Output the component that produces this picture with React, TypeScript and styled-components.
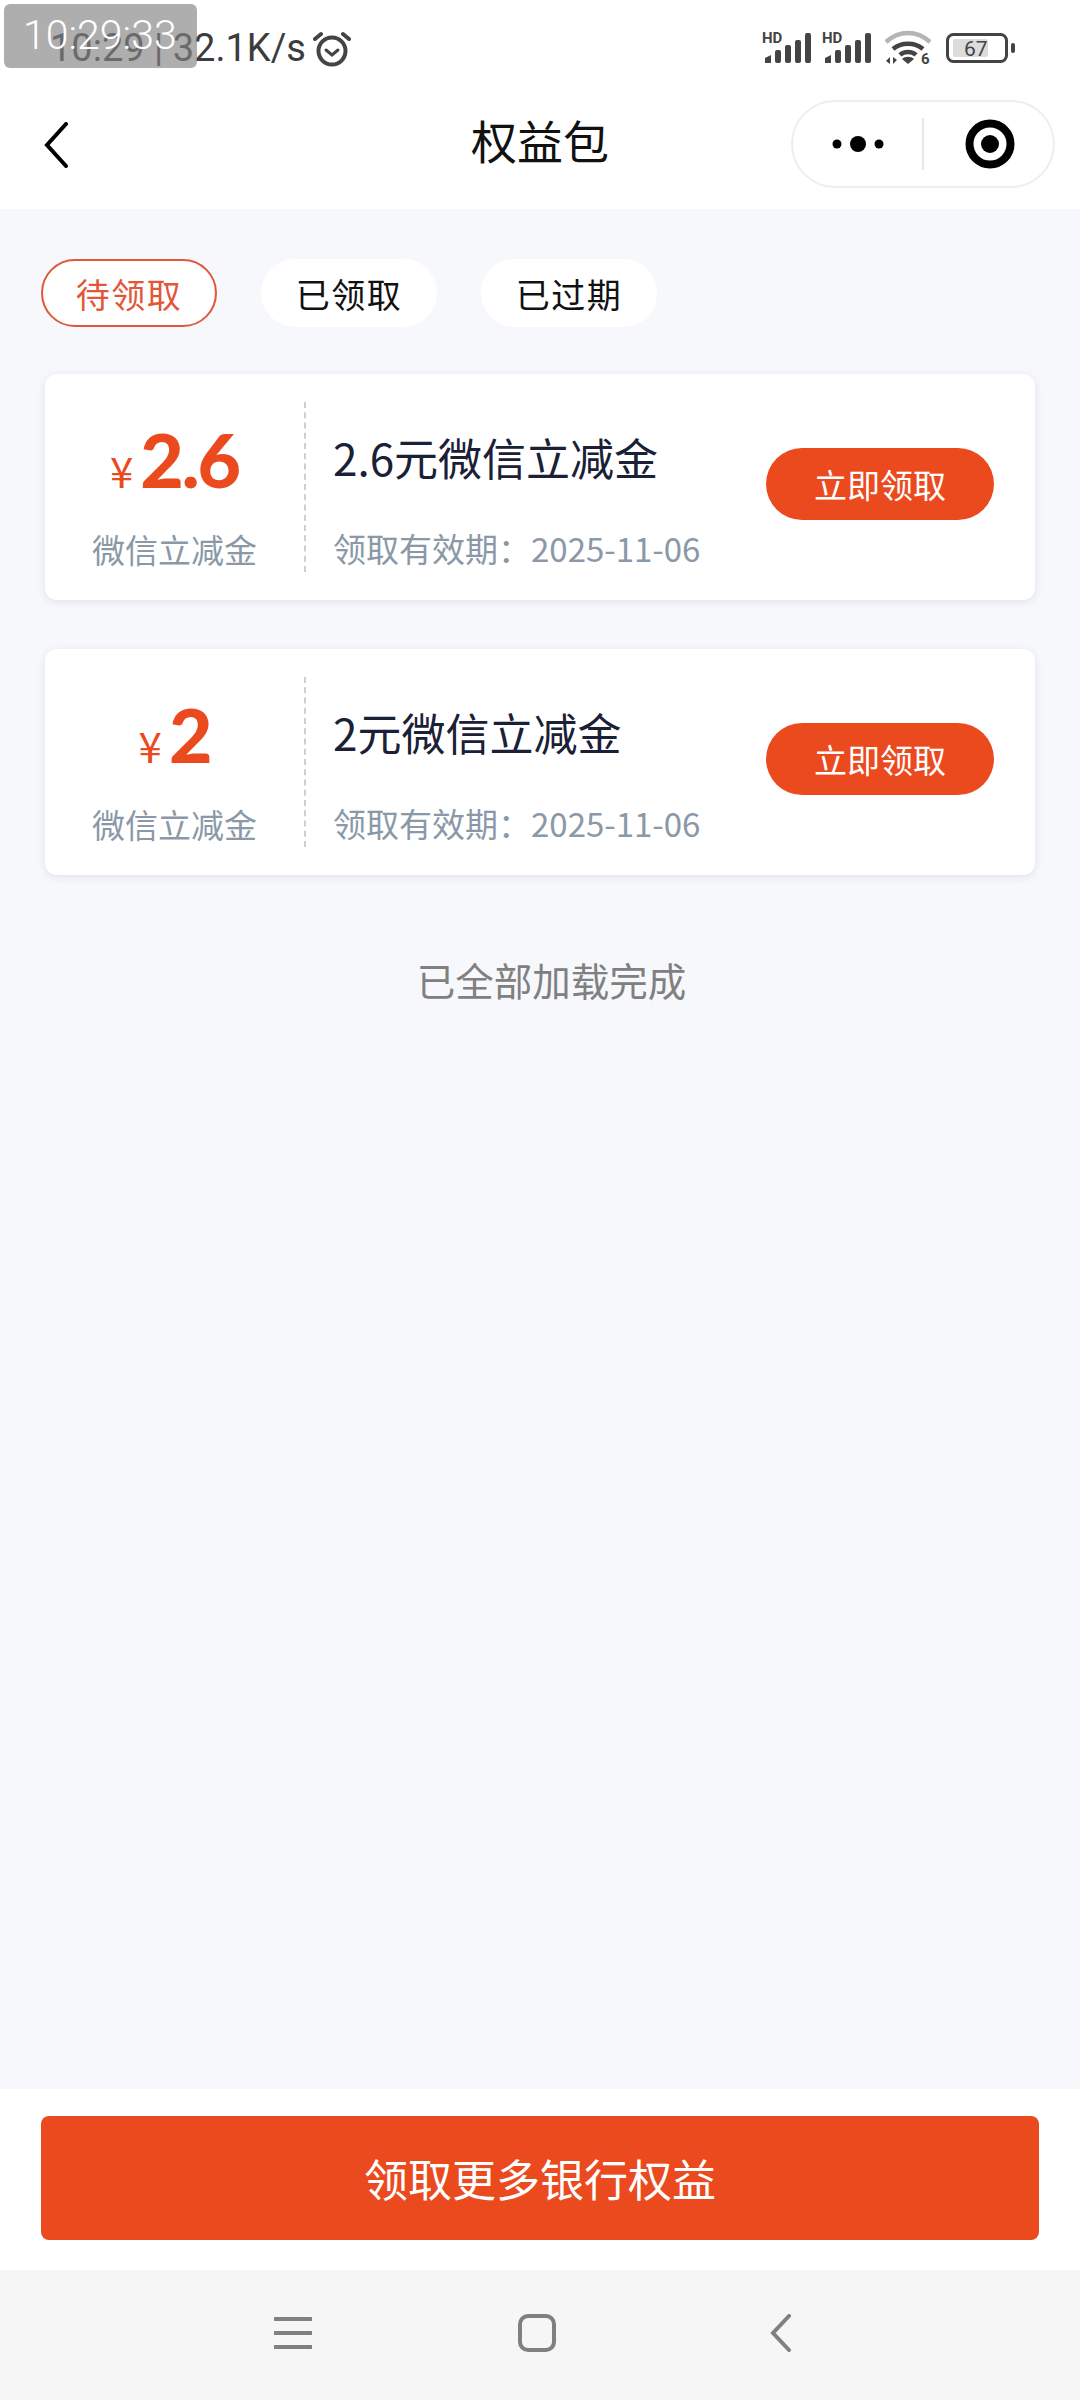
import React from "react";
import styled, { createGlobalStyle } from "styled-components";

const ORANGE = "#eb4a1f";
const CJK = `"Noto Sans CJK SC", "Noto Sans", sans-serif`;

const GlobalStyle = createGlobalStyle`
  html, body {
    margin: 0;
    padding: 0;
    background: #f6f8fc;
  }
  * {
    box-sizing: border-box;
  }
`;

const coupons = [
  { amount: "2.6", title: "2.6元微信立减金" },
  { amount: "2", title: "2元微信立减金" },
];

const tabs = ["待领取", "已领取", "已过期"];

const SignalIcon = () => (
  <svg width="50" height="38" viewBox="0 -3 50 38">
    <text x="0" y="11" fontFamily="Roboto, sans-serif" fontWeight="700" fontSize="15" fill="#444">
      HD
    </text>
    <path d="M3 31v-5l6-3v8z" fill="#444" />
    <rect x="13" y="18" width="6" height="13" rx="2" fill="#444" />
    <rect x="23" y="13" width="6" height="18" rx="2" fill="#444" />
    <rect x="33" y="8" width="6" height="23" rx="2" fill="#444" />
    <rect x="43" y="1" width="6" height="30" rx="2" fill="#444" />
  </svg>
);

const WifiIcon = () => (
  <svg width="46" height="42" viewBox="0 -4 46 42">
    <path d="M1 11C14 -1 32 -1 45 11" fill="none" stroke="#b5b5b5" strokeWidth="4.5" />
    <path d="M8 18c8-7 22-7 30 0" fill="none" stroke="#444" strokeWidth="4.5" />
    <path d="M15 24c4-4 12-4 16 0" fill="none" stroke="#444" strokeWidth="4.5" />
    <path d="M23 33l-6-5c3-3 9-3 12 0z" fill="#444" />
    <path d="M5 33v-7l-4 4zM8 26v7l4-4z" fill="#444" />
    <text x="36" y="33" fontFamily="Roboto, sans-serif" fontWeight="700" fontSize="15" fill="#444">
      6
    </text>
  </svg>
);

const BatteryIcon = () => (
  <svg width="70" height="30" viewBox="0 0 70 30">
    <rect x="1.5" y="1.5" width="59" height="27" rx="6" fill="none" stroke="#444" strokeWidth="3" />
    <rect x="7" y="6" width="35" height="18" rx="2" fill="#dcdcdc" />
    <rect x="65" y="10" width="4" height="10" rx="2" fill="#444" />
    <text x="18" y="23" fontFamily="Roboto, sans-serif" fontSize="21" fill="#444">
      67
    </text>
  </svg>
);

const AlarmIcon = () => (
  <svg width="38" height="37" viewBox="0 0 38 37">
    <circle cx="19" cy="21" r="13.5" fill="none" stroke="#444" strokeWidth="4" />
    <path d="M13 20l6 5 6-5" fill="none" stroke="#444" strokeWidth="3" strokeLinecap="round" />
    <path d="M2 9l6-5M36 9l-6-5" fill="none" stroke="#444" strokeWidth="4" strokeLinecap="round" />
  </svg>
);

const App = () => {
  return (
    <Page>
      <GlobalStyle />
      <Watermark>10:29:33</Watermark>
      <StatusBar>
        <StatusLeft>
          <StatusText>10:29 | 32.1K/s</StatusText>
          <AlarmIcon />
        </StatusLeft>
        <StatusRight>
          <SignalIcon />
          <SignalIcon />
          <WifiSlot>
            <WifiIcon />
          </WifiSlot>
          <BatteryIcon />
        </StatusRight>
      </StatusBar>

      <NavBar>
        <svg width="24" height="46" viewBox="0 0 24 46">
          <path d="M22 2L3 23l19 21" fill="none" stroke="#000" strokeWidth="4" strokeLinecap="round" strokeLinejoin="miter" />
        </svg>
        <NavTitle>权益包</NavTitle>
        <Capsule>
          <CapsuleSide $width={130}>
            <svg width="52" height="18" viewBox="0 0 52 18">
              <circle cx="5" cy="9" r="4.5" fill="#000" />
              <circle cx="26" cy="9" r="8" fill="#000" />
              <circle cx="47" cy="9" r="4.5" fill="#000" />
            </svg>
          </CapsuleSide>
          <CapsuleDivider />
          <CapsuleSide $width={130} $shift={2}>
            <svg width="50" height="50" viewBox="0 0 50 50">
              <circle cx="25" cy="25" r="20.5" fill="none" stroke="#000" strokeWidth="8" />
              <circle cx="25" cy="25" r="9" fill="#000" />
            </svg>
          </CapsuleSide>
        </Capsule>
      </NavBar>

      <Main>
        <TabRow>
          {tabs.map((tab, i) => (
            <Tab key={tab} $active={i === 0}>
              {tab}
            </Tab>
          ))}
        </TabRow>

        <CardList>
          {coupons.map((c) => (
            <Card key={c.title}>
              <CardLeft>
                <AmountRow>
                  <Yen>¥</Yen>
                  <Amount>{c.amount}</Amount>
                </AmountRow>
                <CouponType>微信立减金</CouponType>
              </CardLeft>
              <CardBody>
                <CouponTitle>{c.title}</CouponTitle>
                <Expiry>领取有效期：2025-11-06</Expiry>
              </CardBody>
              <ClaimButton>立即领取</ClaimButton>
            </Card>
          ))}
        </CardList>

        <EndText>已全部加载完成</EndText>
      </Main>

      <Footer>
        <MoreButton>领取更多银行权益</MoreButton>
      </Footer>

      <SystemNav>
        <svg width="38" height="34" viewBox="0 0 38 34">
          <path d="M1 3h36M1 17h36M1 31h36" stroke="#808080" strokeWidth="4" strokeLinecap="round" />
        </svg>
        <svg width="38" height="38" viewBox="0 0 38 38">
          <rect x="2" y="2" width="34" height="34" rx="8" fill="none" stroke="#808080" strokeWidth="4" />
        </svg>
        <svg width="30" height="38" viewBox="0 0 30 38">
          <path d="M27 2L11 19l16 17" fill="none" stroke="#808080" strokeWidth="4" strokeLinecap="round" />
        </svg>
      </SystemNav>
    </Page>
  );
};

export default App;

const Page = styled.div`
  position: relative;
  display: flex;
  flex-direction: column;
  width: 1080px;
  height: 2400px;
  overflow: hidden;
  background: #f6f8fc;
  font-family: ${CJK};
`;

const Watermark = styled.div`
  position: absolute;
  left: 4px;
  top: 4px;
  width: 193px;
  height: 64px;
  padding-left: 19px;
  border-radius: 6px;
  background: rgba(130, 130, 130, 0.65);
  color: #fff;
  font: 300 41px/62px Roboto, sans-serif;
`;

const StatusBar = styled.div`
  display: flex;
  align-items: center;
  justify-content: space-between;
  height: 80px;
  padding: 16px 64px 0 50px;
  background: #fff;
`;

const StatusLeft = styled.div`
  display: flex;
  align-items: center;
  gap: 7px;
`;

const StatusText = styled.span`
  color: #3c3c3c;
  font: 400 38px/48px Roboto, sans-serif;
`;

const StatusRight = styled.div`
  display: flex;
  align-items: center;
  gap: 10px;
`;

const WifiSlot = styled.div`
  display: flex;
  margin: 0 5px 0 3px;
`;

const NavBar = styled.div`
  position: relative;
  display: flex;
  align-items: center;
  justify-content: space-between;
  height: 129px;
  padding: 0 25px 0 44px;
  background: #fff;
`;

const NavTitle = styled.div`
  position: absolute;
  left: 0;
  right: 0;
  top: 29px;
  text-align: center;
  color: #111;
  font-size: 46px;
  line-height: 60px;
`;

const Capsule = styled.div`
  display: flex;
  align-items: center;
  width: 264px;
  height: 88px;
  margin-top: -1px;
  border: 2px solid #eeeeee;
  border-radius: 44px;
  background: #fff;
`;

const CapsuleSide = styled.div<{ $width: number; $shift?: number }>`
  display: flex;
  align-items: center;
  justify-content: center;
  width: ${(p) => p.$width}px;
  padding-left: ${(p) => p.$shift ?? 0}px;
`;

const CapsuleDivider = styled.div`
  flex: none;
  width: 2px;
  height: 52px;
  background: #e8e8e8;
`;

const Main = styled.main`
  flex: 1;
  display: flex;
  flex-direction: column;
  padding: 50px 0 0;
`;

const TabRow = styled.div`
  display: flex;
  gap: 44px;
  padding-left: 41px;
`;

const Tab = styled.div<{ $active?: boolean }>`
  display: flex;
  align-items: center;
  justify-content: center;
  width: 176px;
  height: 68px;
  border-radius: 34px;
  border: 2px solid ${(p) => (p.$active ? "#e2563a" : "#fff")};
  background: #fff;
  color: ${(p) => (p.$active ? "#e2563a" : "#111")};
  font-size: 34px;
  letter-spacing: 1.5px;
`;

const CardList = styled.div`
  display: flex;
  flex-direction: column;
  gap: 49px;
  padding: 47px 45px 0 45px;
`;

const Card = styled.div`
  display: flex;
  align-items: center;
  height: 226px;
  border-radius: 12px;
  background: #fff;
  box-shadow: 0 2px 8px rgba(30, 40, 70, 0.1);
`;

const CardLeft = styled.div`
  display: flex;
  flex-direction: column;
  align-items: center;
  width: 261px;
  height: 170px;
  padding-top: 4px;
  border-right: 2px dashed #cfcfcf;
`;

const AmountRow = styled.div`
  display: flex;
  align-items: baseline;
  gap: 7px;
  height: 106px;
  color: ${ORANGE};
`;

const Yen = styled.span`
  font-size: 42px;
  line-height: 106px;
`;

const Amount = styled.span`
  font: 900 75px/106px Lato, sans-serif;
  letter-spacing: -2px;
`;

const CouponType = styled.div`
  margin-top: 13px;
  color: #8a98a8;
  font-size: 33px;
  line-height: 48px;
`;

const CardBody = styled.div`
  flex: 1;
  display: flex;
  flex-direction: column;
  height: 170px;
  padding-left: 27px;
`;

const CouponTitle = styled.div`
  margin-top: 25px;
  color: #1a2035;
  font-size: 44px;
  line-height: 60px;
`;

const Expiry = styled.div`
  margin-top: 37px;
  color: #8a98a8;
  font-size: 33px;
  line-height: 48px;
`;

const ClaimButton = styled.div`
  display: flex;
  align-items: center;
  justify-content: center;
  width: 228px;
  height: 72px;
  margin: 0 41px 6px 0;
  border-radius: 36px;
  background: ${ORANGE};
  color: #fff;
  font-size: 33px;
`;

const EndText = styled.div`
  margin-top: 76px;
  padding-left: 23px;
  text-align: center;
  color: #808080;
  font-size: 38.5px;
  line-height: 56px;
`;

const Footer = styled.div`
  height: 181px;
  padding: 27px 41px 0;
  background: #fff;
`;

const MoreButton = styled.div`
  display: flex;
  align-items: center;
  justify-content: center;
  height: 124px;
  border-radius: 8px;
  background: ${ORANGE};
  color: #fff;
  font-size: 44px;
`;

const SystemNav = styled.div`
  display: flex;
  align-items: center;
  gap: 206px;
  height: 130px;
  padding: 0 0 5px 274px;
  background: #f6f6f6;
`;
